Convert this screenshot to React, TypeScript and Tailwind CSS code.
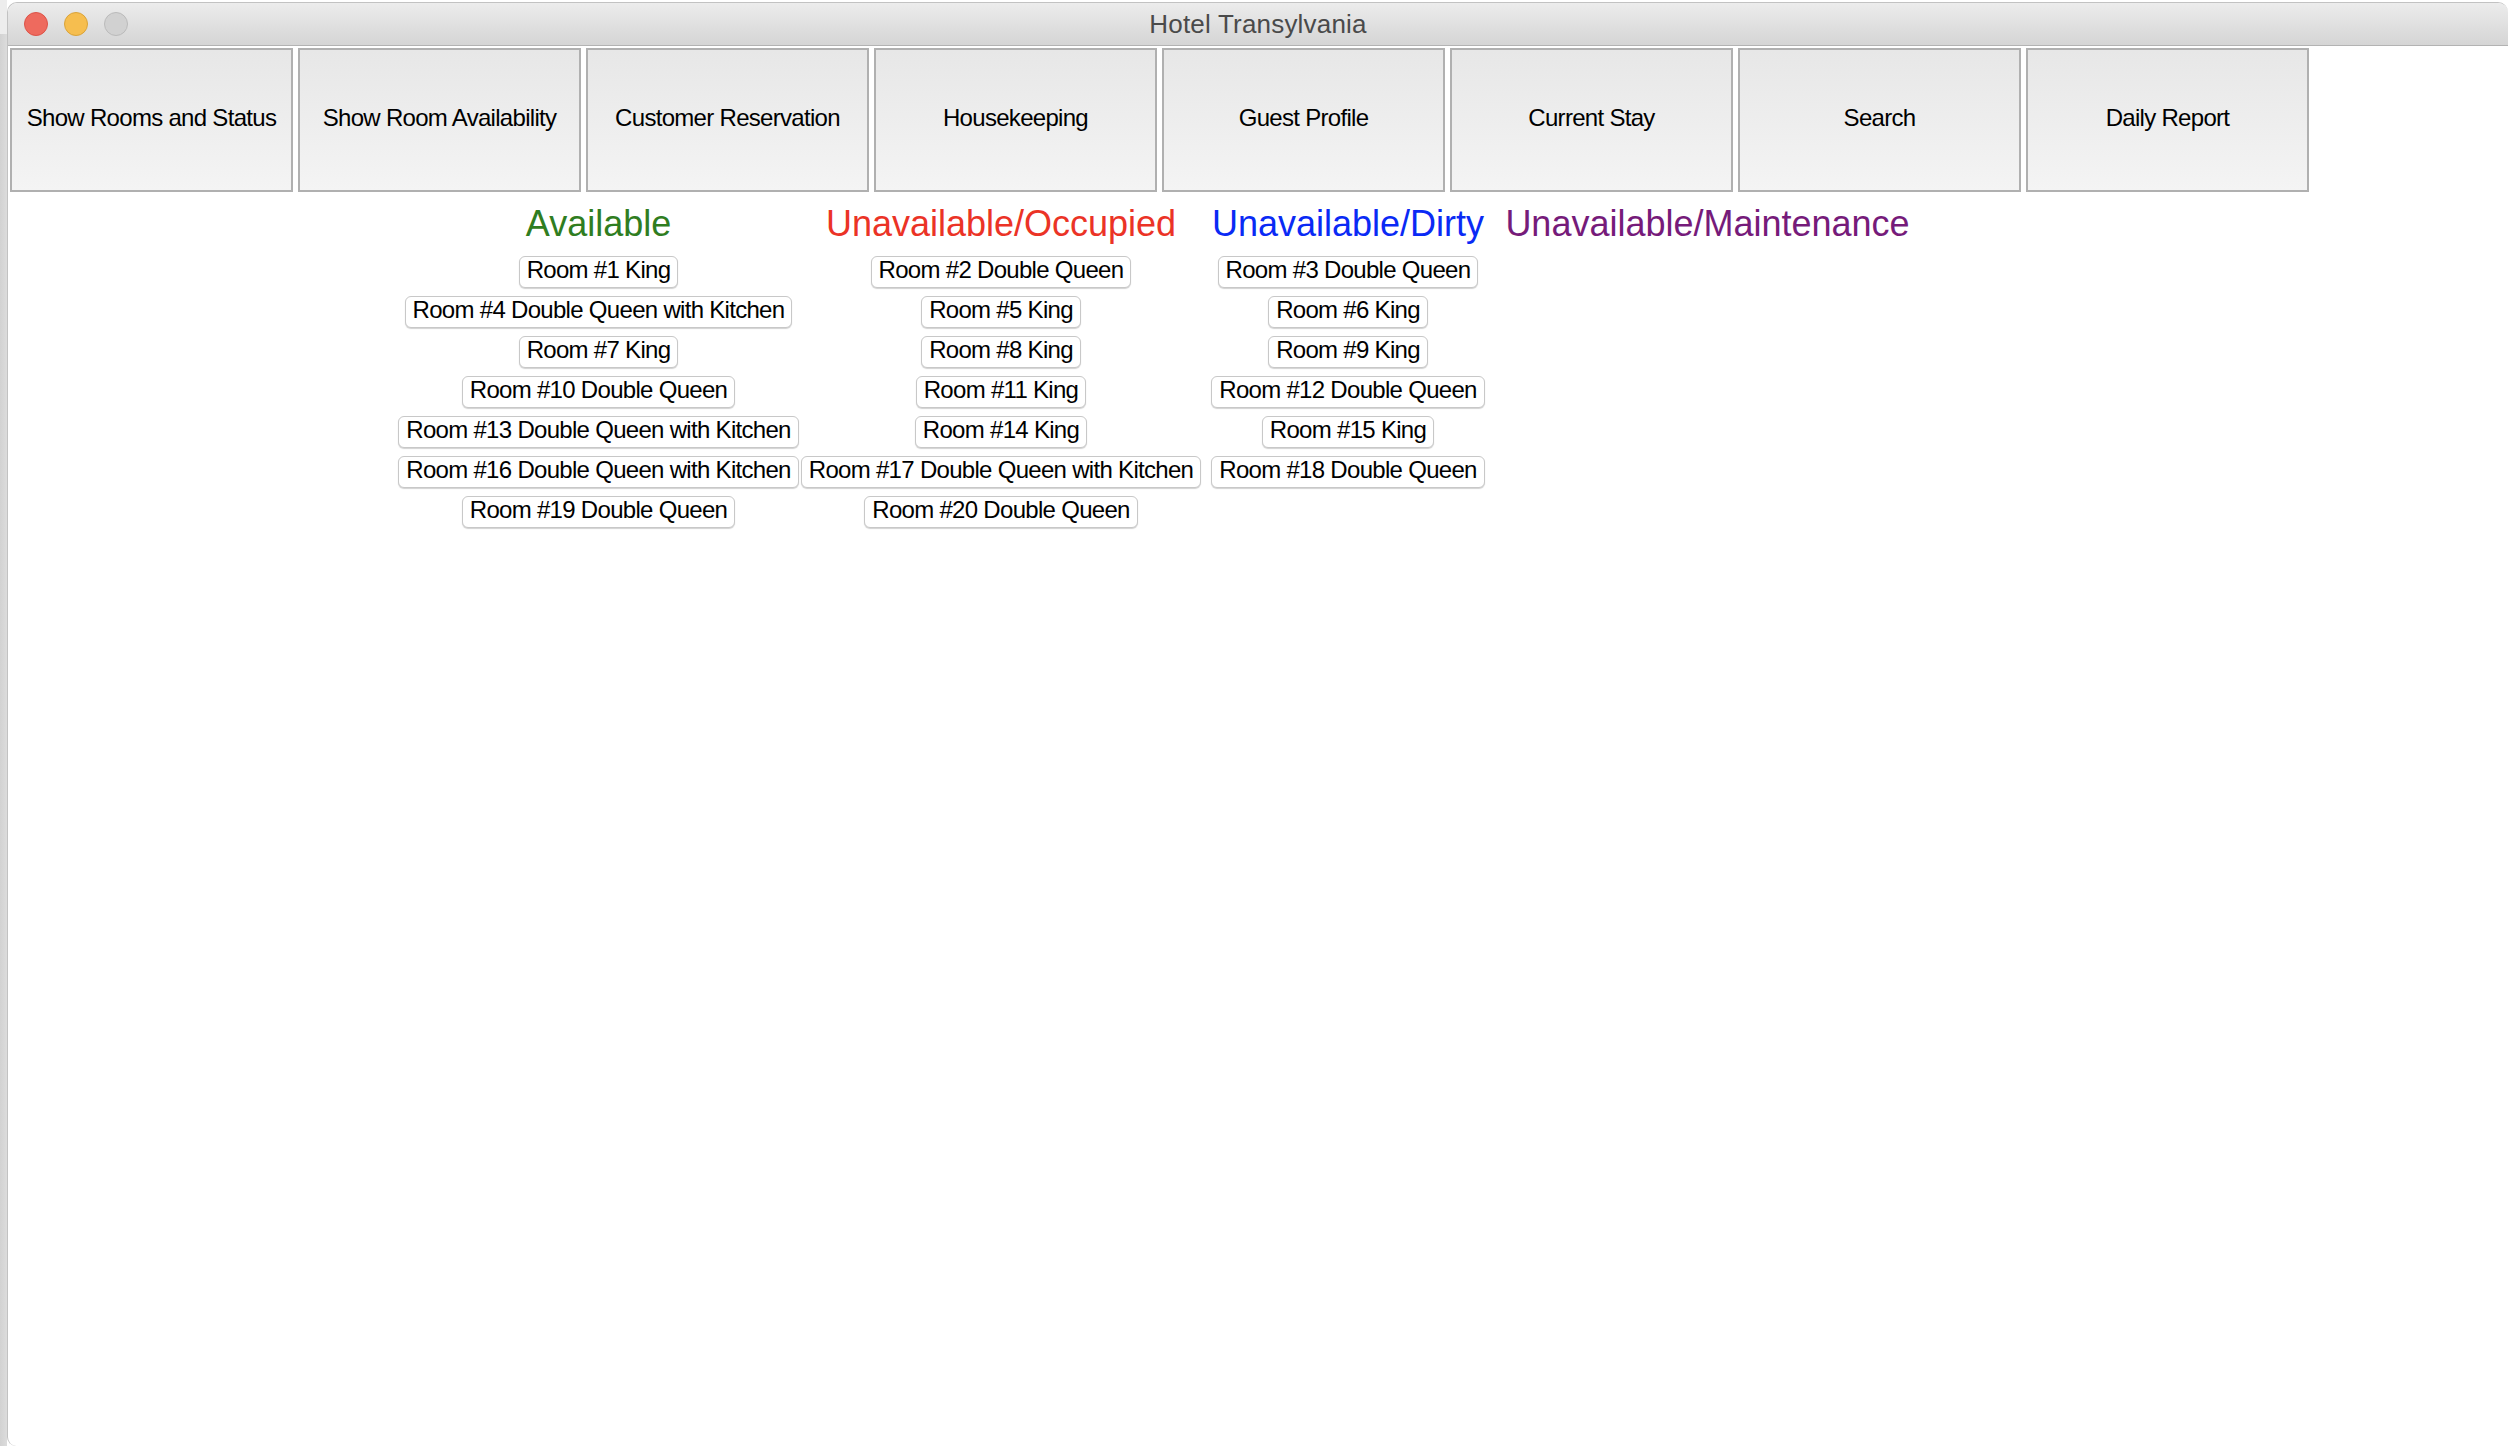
import React from "react";

type Column = {
  title: string;
  color: string;
  width: string;
  rooms: string[];
};

const navItems = [
  "Show Rooms and Status",
  "Show Room Availability",
  "Customer Reservation",
  "Housekeeping",
  "Guest Profile",
  "Current Stay",
  "Search",
  "Daily Report",
];

const columns: Column[] = [
  {
    title: "Available",
    color: "text-[#2f7d21]",
    width: "w-[399px]",
    rooms: [
      "Room #1 King",
      "Room #4 Double Queen with Kitchen",
      "Room #7 King",
      "Room #10 Double Queen",
      "Room #13 Double Queen with Kitchen",
      "Room #16 Double Queen with Kitchen",
      "Room #19 Double Queen",
    ],
  },
  {
    title: "Unavailable/Occupied",
    color: "text-[#eb3326]",
    width: "ml-[4px] w-[398px]",
    rooms: [
      "Room #2 Double Queen",
      "Room #5 King",
      "Room #8 King",
      "Room #11 King",
      "Room #14 King",
      "Room #17 Double Queen with Kitchen",
      "Room #20 Double Queen",
    ],
  },
  {
    title: "Unavailable/Dirty",
    color: "text-[#0a2af5]",
    width: "ml-[11px] w-[274px]",
    rooms: [
      "Room #3 Double Queen",
      "Room #6 King",
      "Room #9 King",
      "Room #12 Double Queen",
      "Room #15 King",
      "Room #18 Double Queen",
    ],
  },
  {
    title: "Unavailable/Maintenance",
    color: "text-[#761b7a]",
    width: "ml-[22px] w-[401px]",
    rooms: [],
  },
];

function RoomButton({ label }: { label: string }) {
  return (
    <div className="h-[32px] whitespace-nowrap rounded-[6px] border border-[#c8c8c8] bg-white px-[7px] text-[24px] leading-[26px] tracking-[-0.7px] text-black shadow-[0_1px_1px_rgba(0,0,0,0.18)]">
      {label}
    </div>
  );
}

export default function App() {
  return (
    <div className="flex h-[1446px] w-[2508px] overflow-hidden bg-white font-['Liberation_Sans',Arial,sans-serif]">
      {/* window behind, left edge */}
      <div className="flex w-[7px] shrink-0 flex-col">
        <div className="h-[34px] bg-[#ededed]" />
        <div className="flex-1 bg-gradient-to-r from-[#d2d2d2] to-[#dcdcdc]" />
      </div>

      <div className="mt-[2px] flex min-w-0 flex-1 flex-col overflow-hidden rounded-t-[10px] rounded-bl-[9px] border-l border-t border-[#c2c2c2] bg-white">
        {/* title bar */}
        <div className="grid h-[43px] shrink-0 grid-cols-[1fr_auto_1fr] items-center border-b border-[#b3b3b3] bg-gradient-to-b from-[#ececec] to-[#d5d5d5]">
          <div className="flex items-center gap-[16px] pl-[16px]">
            <span className="h-[24px] w-[24px] rounded-full border border-[#dc5348] bg-[#ee6a5e]" />
            <span className="h-[24px] w-[24px] rounded-full border border-[#d9a33a] bg-[#f6be4f]" />
            <span className="h-[24px] w-[24px] rounded-full border border-[#bababa] bg-[#d1d1d1]" />
          </div>
          <div className="text-[26px] leading-none tracking-[0.2px] text-[#4a4a4a]">Hotel Transylvania</div>
          <div />
        </div>

        {/* nav buttons */}
        <div className="flex gap-[5px] pl-[2px] pt-[2px]">
          {navItems.map((item) => (
            <div
              key={item}
              className="flex h-[144px] w-[283px] shrink-0 items-center justify-center border-2 border-[#b0b0b0] bg-gradient-to-b from-[#e7e7e7] to-[#f4f4f4] pb-[5px] text-[24px] tracking-[-0.7px] text-black whitespace-nowrap"
            >
              {item}
            </div>
          ))}
        </div>

        {/* status columns */}
        <div className="mt-[12px] flex items-start pl-[391px]">
          {columns.map((col) => (
            <div key={col.title} className={`flex shrink-0 flex-col items-center ${col.width}`}>
              <div className={`h-[40px] whitespace-nowrap text-[36px] leading-[40px] ${col.color}`}>
                {col.title}
              </div>
              <div className="mt-[12px] flex flex-col items-center gap-[8px]">
                {col.rooms.map((room) => (
                  <RoomButton key={room} label={room} />
                ))}
              </div>
            </div>
          ))}
        </div>
      </div>
    </div>
  );
}
